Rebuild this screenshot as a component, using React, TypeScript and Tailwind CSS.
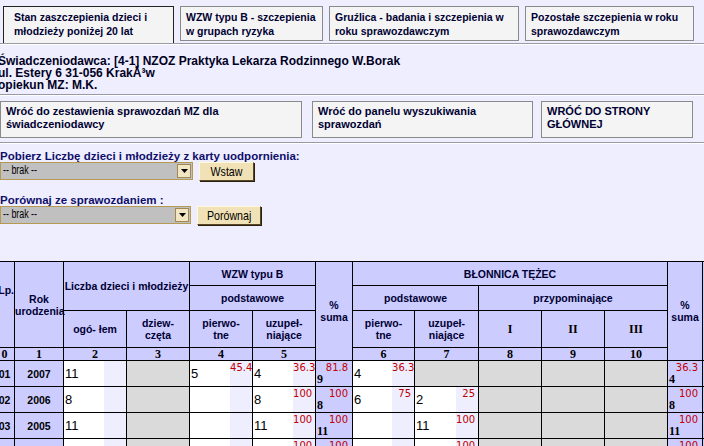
import React from 'react'

type Cell = { v: string; p: string } | null

interface Row {
  lp: string
  rok: string
  c2: string
  c4: Cell
  c5: Cell
  s1: [string, string]
  c6: Cell
  c7: Cell
  s2: [string, string]
}

const rows: Row[] = [
  { lp: '01', rok: '2007', c2: '11', c4: { v: '5', p: '45.4' }, c5: { v: '4', p: '36.3' }, s1: ['81.8', '9'], c6: { v: '4', p: '36.3' }, c7: null, s2: ['36.3', '4'] },
  { lp: '02', rok: '2006', c2: '8', c4: { v: '', p: '' }, c5: { v: '8', p: '100' }, s1: ['100', '8'], c6: { v: '6', p: '75' }, c7: { v: '2', p: '25' }, s2: ['100', '8'] },
  { lp: '03', rok: '2005', c2: '11', c4: { v: '', p: '' }, c5: { v: '11', p: '100' }, s1: ['100', '11'], c6: { v: '', p: '' }, c7: { v: '11', p: '100' }, s2: ['100', '11'] },
  { lp: '04', rok: '2004', c2: '', c4: { v: '', p: '' }, c5: { v: '', p: '100' }, s1: ['100', ''], c6: { v: '', p: '' }, c7: { v: '', p: '100' }, s2: ['100', ''] },
]

const tabs = [
  { label: 'Stan zaszczepienia dzieci i młodzieży poniżej 20 lat', w: 'w-[171px]', active: true },
  { label: 'WZW typu B - szczepienia w grupach ryzyka', w: 'w-[143px]', active: false },
  { label: 'Gruźlica - badania i szczepienia w roku sprawozdawczym', w: 'w-[190px]', active: false },
  { label: 'Pozostałe szczepienia w roku sprawozdawczym', w: 'w-[169px]', active: false },
]

function Hr() {
  return <div className="h-[2px] border-t border-[#9a9aa6] border-b border-b-white" />
}

function Select({ w }: { w: string }) {
  return (
    <div className={`${w} flex items-center h-[18px] border border-[#b49a52] bg-[#c0c0c0] pr-[1px]`}>
      <div className="flex-1 pl-[2px] overflow-hidden">
        <span className="inline-block origin-left scale-x-[0.74] whitespace-nowrap text-[12px] leading-[14px] text-black font-['Liberation_Sans',sans-serif]">-- brak --</span>
      </div>
      <div className="w-[14px] h-[14px] bg-[#f2e6c2] border border-[#a08850] flex items-center justify-center">
        <svg width="7" height="4" viewBox="0 0 7 4"><path d="M0 0h7L3.5 4z" fill="#000" /></svg>
      </div>
    </div>
  )
}

function Btn({ label, w }: { label: string; w: string }) {
  return (
    <div className={`${w} h-[19px] bg-[#f0e2b6] border border-[#fff6dc] border-r-[#5a4620] border-b-[#5a4620] shadow-[1px_1px_0_#2a2010] flex items-center justify-center`}>
      <span className="inline-block scale-x-[0.82] text-[13px] leading-[14px] text-black font-['Liberation_Sans',sans-serif]">{label}</span>
    </div>
  )
}

function DataCell({ c, grey }: { c: Cell; grey?: boolean }) {
  if (grey || c === null) return <td className="border border-black bg-[#dadada] p-0" />
  return (
    <td className="border border-black p-0 overflow-hidden">
      <div className="flex h-[25px]">
        <div className="flex-1 bg-white flex items-center pl-[1px] pt-[1px] text-[13px] text-black font-['Liberation_Sans',sans-serif]">{c.v}</div>
        <div className="w-[22px] bg-[#eeeeff] text-right pr-[3px] whitespace-nowrap text-[10px] leading-[12px] pt-[1px] text-[#c00000] font-['DejaVu_Sans',sans-serif]">{c.p}</div>
      </div>
    </td>
  )
}

function SumCell({ s }: { s: [string, string] }) {
  return (
    <td className="border border-black p-0 bg-[#ccccff] align-top">
      <div className="flex flex-col justify-between h-[25px] pb-[3px]">
        <div className="text-right pr-[4px] text-[10px] leading-[12px] pt-[1px] text-[#c00000] font-['DejaVu_Sans',sans-serif]">{s[0]}</div>
        <div className="pl-[1px] text-[12px] leading-[11px] font-bold text-black font-['Liberation_Serif',serif]">{s[1]}</div>
      </div>
    </td>
  )
}

export default function App() {
  const th = 'border border-black bg-[#ccccff] text-[#000033] font-bold text-center p-0 leading-[12px]'
  const num = "border border-black bg-[#ccccff] text-black font-bold text-center p-0 text-[12px] leading-[11px] font-['Liberation_Serif',serif]"
  return (
    <div className="w-[704px] h-[446px] overflow-hidden bg-[#eeeeff] font-['Liberation_Sans',Arial,sans-serif] text-[10.5px] text-[#000033]">
      {/* zakładki */}
      <div className="flex items-start gap-[6px] pt-[6px] pl-[3px] h-[43px]">
        {tabs.map((t) => (
          <div
            key={t.label}
            className={`${t.w} ${t.active ? 'h-[37px] border border-b-0 border-[#222] pl-[10px]' : 'h-[35px] border border-[#8a8a8a] pl-[5px]'} bg-[#f4f4f4] pt-[3px] pr-[6px] font-bold leading-[14px]`}
          >
            {t.label}
          </div>
        ))}
      </div>
      <Hr />

      {/* świadczeniodawca */}
      <div className="-ml-[2px] mt-[10px] font-bold leading-[12px] text-[12px] text-[#000022]">
        <div>Świadczeniodawca: [4-1] NZOZ Praktyka Lekarza Rodzinnego W.Borak</div>
        <div>ul. Estery 6 31-056 KrakĂ³w</div>
        <div>opiekun MZ: M.K.</div>
      </div>
      <div className="mt-[3px]">
        <Hr />
      </div>

      {/* powroty */}
      <div className="flex items-start pt-[5px] text-[11px]">
        <div className="w-[302px] h-[37px] border border-[#8a8a8a] bg-[#f4f4f4] pl-[5px] pt-[3px] font-bold leading-[13px]">
          Wróć do zestawienia sprawozdań MZ dla<br />świadczeniodawcy
        </div>
        <div className="ml-[10px] w-[221px] h-[37px] border border-[#8a8a8a] bg-[#f4f4f4] pl-[5px] pt-[3px] font-bold leading-[13px]">
          Wróć do panelu wyszukiwania<br />sprawozdań
        </div>
        <div className="ml-[8px] w-[152px] h-[37px] border border-[#8a8a8a] bg-[#f4f4f4] pl-[5px] pt-[3px] font-bold leading-[13px]">
          WRÓĆ DO STRONY<br />GŁÓWNEJ
        </div>
      </div>
      <div className="mt-[4px]">
        <Hr />
      </div>

      {/* formularze */}
      <div className="pt-[6px] font-bold text-[11.5px] text-[#10106a] leading-[12px]">Pobierz Liczbę dzieci i młodzieży z karty uodpornienia:</div>
      <div className="flex items-start gap-[6px]">
        <Select w="w-[193px]" />
        <Btn label="Wstaw" w="w-[55px]" />
      </div>
      <div className="pt-[13px] font-bold text-[11.5px] text-[#10106a] leading-[12px]">Porównaj ze sprawozdaniem :</div>
      <div className="flex items-start gap-[6px]">
        <Select w="w-[191px]" />
        <Btn label="Porównaj" w="w-[64px]" />
      </div>

      {/* tabela */}
      <table className="mt-[36px] -ml-[6px] border-collapse table-fixed w-[762px]">
        <colgroup>
          <col className="w-[20px]" />
          <col className="w-[49px]" />
          <col className="w-[63px]" />
          <col className="w-[63px]" />
          <col className="w-[63px]" />
          <col className="w-[63px]" />
          <col className="w-[37px]" />
          <col className="w-[62px]" />
          <col className="w-[64px]" />
          <col className="w-[63px]" />
          <col className="w-[63px]" />
          <col className="w-[63px]" />
          <col className="w-[35px]" />
          <col className="w-[56px]" />
        </colgroup>
        <tbody>
          <tr className="h-[24px]">
            <td rowSpan={3} className={`${th} align-top pt-[22px] text-right`}>Lp.</td>
            <td rowSpan={3} className={th}>Rok<br />urodzenia</td>
            <td rowSpan={2} colSpan={2} className={th}>Liczba dzieci i młodzieży</td>
            <td colSpan={2} className={th}>WZW typu B</td>
            <td rowSpan={4} className={th}>%<br />suma</td>
            <td colSpan={5} className={th}>BŁONNICA TĘŻEC</td>
            <td rowSpan={4} className={th}>%<br />suma</td>
            <td rowSpan={4} className={th} />
          </tr>
          <tr className="h-[25px]">
            <td colSpan={2} className={th}>podstawowe</td>
            <td colSpan={2} className={th}>podstawowe</td>
            <td colSpan={3} className={th}>przypominające</td>
          </tr>
          <tr className="h-[37px]">
            <td className={th}>ogó- łem</td>
            <td className={th}>dziew-<br />częta</td>
            <td className={th}>pierwo-<br />tne</td>
            <td className={th}>uzupeł-<br />niające</td>
            <td className={th}>pierwo-<br />tne</td>
            <td className={th}>uzupeł-<br />niające</td>
            <td className={num}>I</td>
            <td className={num}>II</td>
            <td className={num}>III</td>
          </tr>
          <tr className="h-[13px]">
            {['0', '1', '2', '3', '4', '5', '6', '7', '8', '9', '10'].map((n) => (
              <td key={n} className={num}>{n}</td>
            ))}
          </tr>
          {rows.map((r) => (
            <tr key={r.lp} className="h-[26px]">
              <td className={`${th} text-black`}>{r.lp}</td>
              <td className={`${th} text-black`}>{r.rok}</td>
              <DataCell c={{ v: r.c2, p: '' }} />
              <DataCell c={null} grey />
              <DataCell c={r.c4} />
              <DataCell c={r.c5} />
              <SumCell s={r.s1} />
              <DataCell c={r.c6} />
              <DataCell c={r.c7} />
              <DataCell c={null} grey />
              <DataCell c={null} grey />
              <DataCell c={null} grey />
              <SumCell s={r.s2} />
              <td className="border border-black bg-[#ccccff] p-0" />
            </tr>
          ))}
        </tbody>
      </table>
    </div>
  )
}
